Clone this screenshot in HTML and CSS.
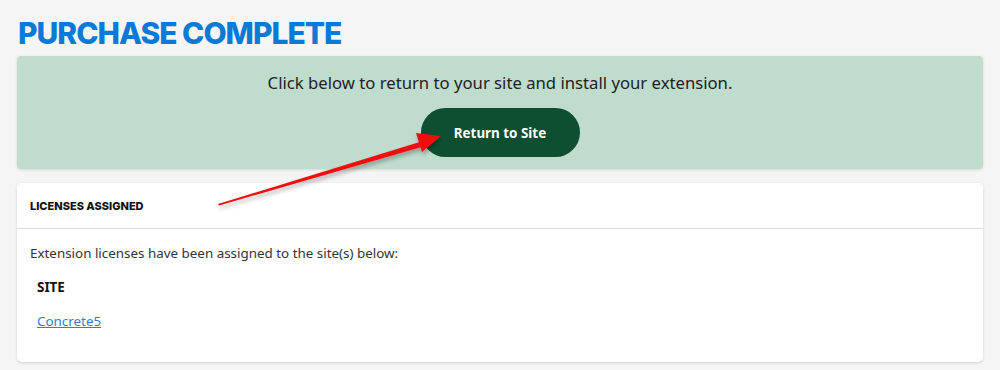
FILE: index.html
```html
<!DOCTYPE html>
<html lang="en">
<head>
<meta charset="utf-8">
<title>Purchase Complete</title>
<link rel="stylesheet" href="styles.css">
</head>
<body>
<main class="page">
  <h1 class="title">PURCHASE COMPLETE</h1>
  <section class="notice">
    <p class="notice-text">Click below to return to your site and install your extension.</p>
    <a class="btn" href="#">Return to Site</a>
  </section>
  <section class="card">
    <header class="card-head">LICENSES ASSIGNED</header>
    <div class="card-body">
      <p class="intro">Extension licenses have been assigned to the site(s) below:</p>
      <div class="site-label">SITE</div>
      <a class="site-link" href="#">Concrete5</a>
    </div>
  </section>
  <svg class="arrow" width="1000" height="370" viewBox="0 0 1000 370" aria-hidden="true">
    <defs>
      <filter id="sh" x="-10%" y="-10%" width="120%" height="140%">
        <feDropShadow dx="1" dy="3" stdDeviation="2" flood-color="#000" flood-opacity="0.3"/>
      </filter>
    </defs>
    <g filter="url(#sh)">
      <polygon fill="#f20c0c" points="218,204 423,141 425,146 219,205.5"/>
      <polygon fill="#f20c0c" points="441,136 416,133 422,152"/>
    </g>
  </svg>
</main>
</body>
</html>
```
FILE: styles.css
```css
html, body {
  margin: 0;
  padding: 0;
}
body {
  background: #f5f5f5;
  font-family: "Noto Sans", "Open Sans", sans-serif;
  color: #222;
  width: 1000px;
  height: 370px;
  overflow: hidden;
}
.page {
  position: relative;
  padding: 14px 17px 0 17px;
  display: flex;
  flex-direction: column;
}
.title {
  margin: 0 0 0 1px;
  font-family: "Inter", sans-serif;
  font-weight: 800;
  font-size: 30px;
  line-height: 38px;
  color: #0b7ad6;
  letter-spacing: -1px;
  height: 42px;
}
.notice {
  background: #c0dccd;
  border-radius: 4px;
  box-shadow: 0 1px 3px rgba(0,0,0,0.12);
  height: 113px;
  display: flex;
  flex-direction: column;
  align-items: center;
  box-sizing: border-box;
  padding-top: 14px;
}
.notice-text {
  margin: 0;
  font-size: 16.7px;
  line-height: 26px;
  color: #222;
}
.btn {
  margin-top: 12px;
  width: 159px;
  height: 49px;
  border-radius: 25px;
  background: #0e4f32;
  color: #fff;
  text-decoration: none;
  font-weight: 700;
  font-size: 13.4px;
  display: flex;
  align-items: center;
  justify-content: center;
}
.card {
  margin-top: 14px;
  background: #fff;
  border-radius: 5px;
  box-shadow: 0 1px 3px rgba(0,0,0,0.15);
  height: 179px;
}
.card-head {
  height: 45px;
  border-bottom: 1px solid #ddd;
  padding-left: 13px;
  display: flex;
  align-items: center;
  font-family: "Inter", sans-serif;
  font-weight: 800;
  font-size: 11px;
  color: #111;
}
.card-body {
  padding: 13px 13px 0 13px;
  display: flex;
  flex-direction: column;
  align-items: flex-start;
}
.intro {
  margin: 0;
  font-size: 13.4px;
  line-height: 22px;
  color: #333;
}
.site-label {
  margin: 12px 0 0 7px;
  font-weight: 700;
  font-size: 13.4px;
  line-height: 22px;
  color: #111;
}
.site-link {
  margin: 12px 0 0 7px;
  font-size: 13.4px;
  line-height: 22px;
  color: #2a7fd4;
  text-decoration: underline;
}
.arrow {
  position: absolute;
  left: 0;
  top: 0;
  pointer-events: none;
}
```
